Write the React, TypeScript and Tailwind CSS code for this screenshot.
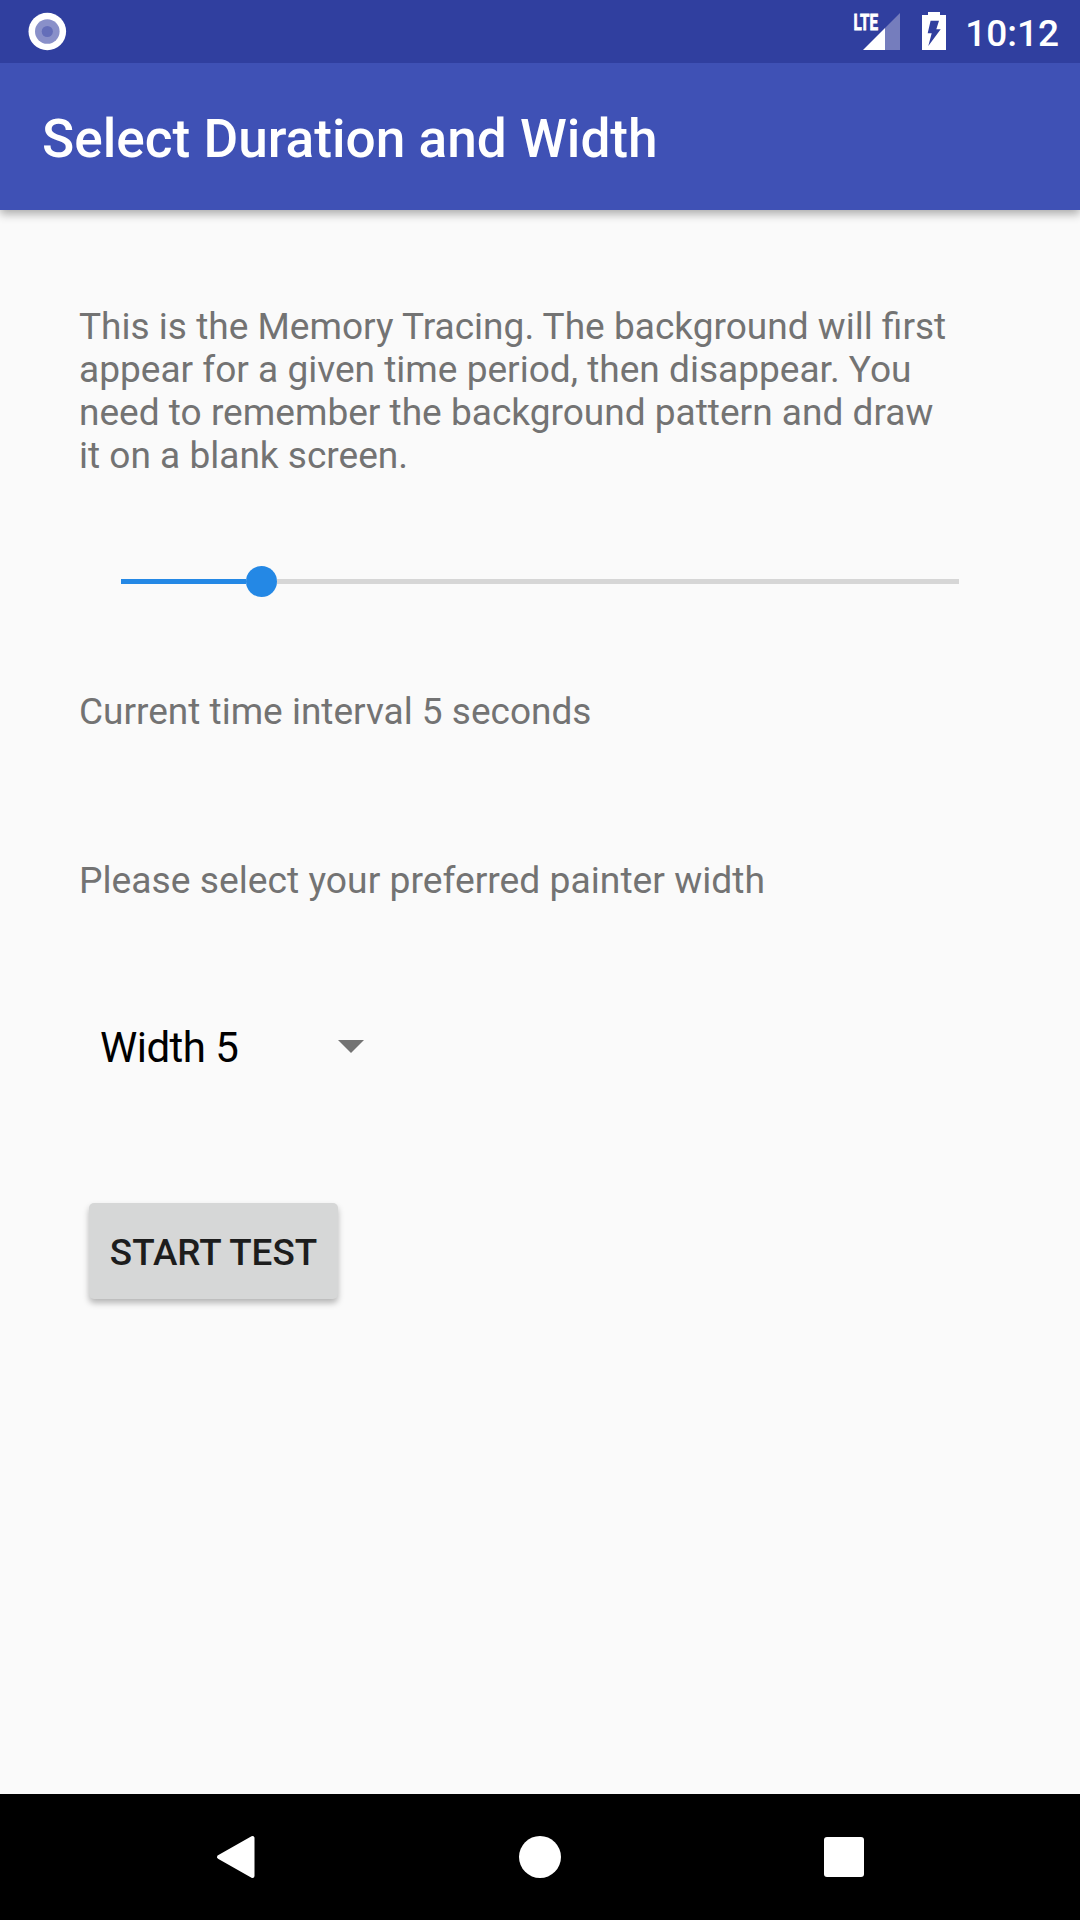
function StatusBar() {
  return (
    <div className="flex h-[63px] items-center bg-[#303f9f] pl-7 pr-[21px]">
      <svg className="h-[63px] w-10" viewBox="28 0 40 63">
        <circle cx="47.3" cy="31.5" r="18.8" fill="#fff" />
        <circle cx="47.3" cy="31.5" r="12.3" fill="#8990c9" />
        <circle cx="47.3" cy="31.5" r="5.6" fill="#646eb9" />
      </svg>
      <svg className="ml-auto mr-[18px] h-[63px] w-[97px]" viewBox="850 0 97 63">
        <text x="853.5" y="29.7" fontSize="22.5" fontWeight="700" textLength="24.5" lengthAdjust="spacingAndGlyphs" fill="#fff" stroke="#fff" strokeWidth="0.8">
          LTE
        </text>
        <path d="M900 13V50H885V28Z" fill="#757dbd" />
        <path d="M885 28V50H863Z" fill="#fff" />
        <path d="M928 12h12v3h6v35h-24V15h6Z" fill="#fff" />
        <path d="M930.6 20.7H939L936.3 29.3H940.7L928.3 46L931.7 33.3H927.7Z" fill="#303f9f" />
      </svg>
      <span className="mt-[3px] text-[37px] leading-[43px] font-medium">10:12</span>
    </div>
  );
}

function NavBar() {
  return (
    <nav className="flex h-[126px] shrink-0 items-center justify-between bg-black pl-[215px] pr-[214px]">
      <button aria-label="Back">
        <svg className="h-[44px] w-[42px]" viewBox="0 0 42 44">
          <path d="M4 22L37.5 3V41Z" fill="#fff" stroke="#fff" strokeWidth="4" strokeLinejoin="round" />
        </svg>
      </button>
      <button aria-label="Home" className="mr-[2px] size-[42px] rounded-full bg-white" />
      <button aria-label="Recent apps" className="mr-[2px] size-[40px] rounded-[3px] bg-white" />
    </nav>
  );
}

export default function App() {
  return (
    <div className="flex h-[1920px] w-[1080px] flex-col overflow-hidden bg-[#fafafa] font-['Roboto',sans-serif] text-[37px] leading-[43px] text-[#737373]">
      <header className="z-10 shrink-0 bg-[#3f51b5] text-white shadow-[0_4px_9px_rgba(0,0,0,0.32)]">
        <StatusBar />
        <h1 className="flex h-[147px] items-center px-[42px] pt-[5px] text-[53.2px] font-medium">Select Duration and Width</h1>
      </header>
      <main className="flex flex-1 flex-col items-start pl-[79px] pt-[95px]">
        <p className="w-[876px] text-[37.05px]">
          This is the Memory Tracing. The background will first appear for a given time period, then disappear. You need to
          remember the background pattern and draw it on a blank screen.
        </p>
        <div className="mt-[88px] ml-[42px] flex h-8 w-[838px] items-center">
          <div className="h-[5px] w-[125px] bg-[#2488e5]" />
          <div className="size-[31px] rounded-full bg-[#2488e5]" />
          <div className="h-[5px] flex-1 bg-[#d6d6d6]" />
        </div>
        <p className="mt-[93px]">Current time interval 5 seconds</p>
        <p className="mt-[126px] text-[37.25px]">Please select your preferred painter width</p>
        <button className="mt-[121px] ml-[21px] flex h-[49px] w-[263.5px] items-center justify-between text-[42px] leading-[49px] tracking-[-0.55px] text-black">
          <span>Width 5</span>
          <svg className="mt-[-2px] h-[13px] w-[26px]" viewBox="0 0 26 13">
            <path d="M0 0H26L13 13Z" fill="#737373" />
          </svg>
        </button>
        <button className="mt-[131px] ml-[9.5px] flex h-[96px] w-[249px] items-center justify-center rounded-[5px] bg-[#d6d7d7] pt-[3px] pl-px text-[36.85px] font-medium text-[#1d1d1d] shadow-[0_4px_6px_rgba(0,0,0,0.28)]">
          START TEST
        </button>
      </main>
      <NavBar />
    </div>
  );
}
